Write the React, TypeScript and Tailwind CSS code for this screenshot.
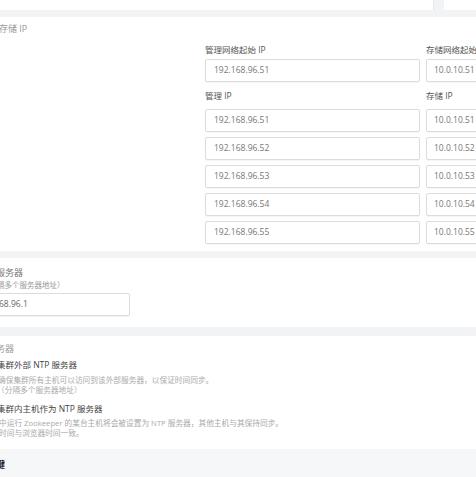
import React from 'react';

const font = "font-['Open_Sans','Noto_Sans_CJK_SC',sans-serif]";

interface IpRow {
  mgmt: string;
  storage: string;
}

const rows: IpRow[] = [
  { mgmt: '192.168.96.51', storage: '10.0.10.51' },
  { mgmt: '192.168.96.52', storage: '10.0.10.52' },
  { mgmt: '192.168.96.53', storage: '10.0.10.53' },
  { mgmt: '192.168.96.54', storage: '10.0.10.54' },
  { mgmt: '192.168.96.55', storage: '10.0.10.55' },
];

function Field({ value, wide }: { value: string; wide?: boolean }) {
  return (
    <div
      className={`h-[23px] flex items-center border border-[#dcdcdc] bg-white rounded-[2px] shadow-[0_1px_1px_rgba(0,0,0,0.04)] text-[8.5px] text-[#777] ${
        wide ? 'w-[215px] pl-[8px]' : 'w-[80px] pl-[7px]'
      }`}
    >
      {value}
    </div>
  );
}

export default function App() {
  return (
    <div className={`w-[476px] h-[477px] overflow-hidden bg-[#f2f3f5] ${font}`}>
      {/* top cards (cut off) */}
      <div className="flex h-[10px] gap-[10px]">
        <div className="w-[434px] bg-white border-r border-[#e8e8e8]" />
        <div className="flex-1 bg-white" />
      </div>

      {/* storage ip card */}
      <div className="mt-[7px] h-[234px] bg-white overflow-hidden">
        <div className="pt-[6px] text-[9px] leading-[12px] text-[#999] -ml-[1px]">存储 IP</div>
        <div className="flex gap-[6px] pl-[205px] pt-[9px]">
          <div className="flex flex-col">
            <div className="text-[8.5px] leading-[12px] text-[#555]">管理网络起始 IP</div>
            <div className="mt-[3px]">
              <Field value="192.168.96.51" wide />
            </div>
            <div className="mt-[8px] text-[8.5px] leading-[12px] text-[#555]">管理 IP</div>
            <div className="mt-[7px] flex flex-col gap-[5px]">
              {rows.map((r) => (
                <Field key={r.mgmt} value={r.mgmt} wide />
              ))}
            </div>
          </div>
          <div className="flex flex-col shrink-0">
            <div className="text-[8.5px] leading-[12px] text-[#555] whitespace-nowrap">存储网络起始 IP</div>
            <div className="mt-[3px]">
              <Field value="10.0.10.51" />
            </div>
            <div className="mt-[8px] text-[8.5px] leading-[12px] text-[#555]">存储 IP</div>
            <div className="mt-[7px] flex flex-col gap-[5px]">
              {rows.map((r) => (
                <Field key={r.storage} value={r.storage} />
              ))}
            </div>
          </div>
        </div>
      </div>

      {/* ntp server address card */}
      <div className="mt-[7px] h-[69px] bg-white overflow-hidden">
        <div className="pt-[9px] -ml-[4px] text-[9px] leading-[12px] text-[#777]">服务器</div>
        <div className="mt-[1px] -ml-[3px] text-[7.5px] leading-[10px] text-[#999]">隔多个服务器地址）</div>
        <div className="mt-[3px] -ml-[10px] w-[140px] h-[23px] flex items-center pl-[8px] border border-[#dcdcdc] rounded-[2px] text-[8.5px] text-[#666] shadow-[0_1px_1px_rgba(0,0,0,0.05)]">
          68.96.1
        </div>
      </div>

      {/* ntp mode card */}
      <div className="mt-[9px] h-[113px] bg-white overflow-hidden">
        <div className="pt-[7px] -ml-[4px] text-[9px] leading-[12px] text-[#999]">务器</div>
        <div className="mt-[4px] -ml-[3px] text-[8.5px] leading-[12px] text-[#444]">集群外部 NTP 服务器</div>
        <div className="mt-[4px] -ml-[2px] text-[7.7px] leading-[10px] text-[#aaa]">
          确保集群所有主机可以访问到该外部服务器，以保证时间同步。
        </div>
        <div className="-ml-[3px] text-[7.7px] leading-[10px] text-[#aaa]">（分隔多个服务器地址）</div>
        <div className="mt-[8px] -ml-[3px] text-[8.5px] leading-[12px] text-[#444]">集群内主机作为 NTP 服务器</div>
        <div className="mt-[3px] -ml-[1px] text-[7.7px] leading-[10px] text-[#aaa]">
          中运行 Zookeeper 的某台主机将会被设置为 NTP 服务器，其他主机与其保持同步。
        </div>
        <div className="-ml-[1px] text-[7.7px] leading-[10px] text-[#aaa]">时间与浏览器时间一致。</div>
      </div>

      {/* next section header */}
      <div className="h-[28px] bg-[#f6f7f9] pt-[10px]">
        <div className="-ml-[4px] text-[9px] leading-[12px] font-bold text-[#222]">键</div>
      </div>
    </div>
  );
}
